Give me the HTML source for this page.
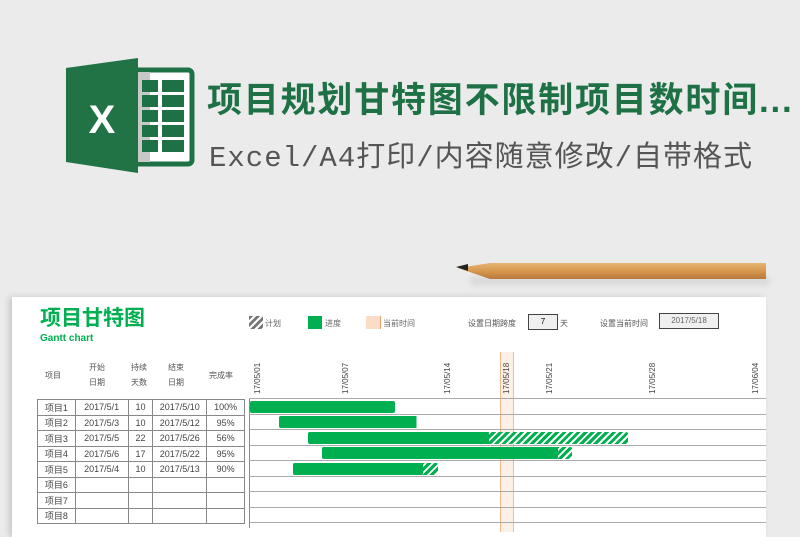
<!DOCTYPE html>
<html><head><meta charset="utf-8"><style>
body{margin:0;width:800px;height:526px;overflow:hidden;background:#ebebeb;font-family:"Liberation Sans","Noto Sans CJK SC",sans-serif;position:relative}
.abs{position:absolute}
.title{left:207px;top:72px;font-size:35px;font-weight:bold;color:#1e7145;letter-spacing:1.8px;white-space:nowrap}
.sub{left:209px;top:133px;font-size:29px;color:#555;white-space:nowrap;font-family:"Liberation Mono","Noto Sans CJK SC",monospace;letter-spacing:1px}
.paper{left:12px;top:297px;width:754px;height:240px;background:#fff;box-shadow:-3px 0 6px rgba(0,0,0,.15)}
table{border-collapse:collapse;font-size:9px;color:#444}
td{border:1px solid #888;height:14.5px;padding:0;text-align:center;white-space:nowrap}
.hl{position:absolute;left:249px;width:517px;height:1px;background:#aaa}
.bar{position:absolute;height:12px;border-radius:2px}
.date{position:absolute;font-size:8px;color:#444;transform:rotate(-90deg);transform-origin:left top;white-space:nowrap}
</style></head><body>
<svg class="abs" style="left:64px;top:58px" width="132" height="115" viewBox="0 0 132 115">
<rect x="70" y="12" width="58" height="94" rx="4" fill="#fff" stroke="#1e7145" stroke-width="5"/>
<rect x="72" y="14" width="14" height="90" fill="#c8c8c8"/>
<g fill="#1e7145">
<rect x="78" y="22" width="16" height="12"/><rect x="98" y="22" width="22" height="12"/>
<rect x="78" y="37" width="16" height="12"/><rect x="98" y="37" width="22" height="12"/>
<rect x="78" y="52" width="16" height="12"/><rect x="98" y="52" width="22" height="12"/>
<rect x="78" y="67" width="16" height="12"/><rect x="98" y="67" width="22" height="12"/>
<rect x="78" y="82" width="16" height="12"/><rect x="98" y="82" width="22" height="12"/>
</g>
<path d="M2 10 L74 0 L74 115 L2 104 Z" fill="#217346"/>
<text x="38" y="75" font-size="40" font-weight="bold" fill="#fff" text-anchor="middle" font-family="Liberation Sans">X</text>
</svg>
<div class="abs title">项目规划甘特图不限制项目数时间...</div>
<div class="abs sub">Excel/A4打印/内容随意修改/自带格式</div>
<div class="abs" style="left:470px;top:277px;width:300px;height:8px;background:rgba(0,0,0,.08);filter:blur(3px)"></div>
<svg class="abs" style="left:456px;top:261px" width="312" height="20">
<defs><linearGradient id="pg" x1="0" y1="0" x2="0" y2="1"><stop offset="0" stop-color="#e6b574"/><stop offset=".5" stop-color="#d7984f"/><stop offset="1" stop-color="#b8783a"/></linearGradient></defs>
<path d="M34 2 L310 2 L310 18 L34 18 L2 7 Z" fill="url(#pg)"/>
<path d="M0 6 L12 3 L12 10 Z" fill="#222"/>
</svg>
<div class="abs paper"></div>
<div class="abs" style="left:40px;top:302px;font-size:21px;font-weight:bold;color:#00b050">项目甘特图</div>
<div class="abs" style="left:40px;top:333px;font-size:10px;font-weight:bold;color:#00b050">Gantt chart</div>
<div class="abs" style="left:249px;top:316px;width:14px;height:13px;background:repeating-linear-gradient(135deg,#777 0 3px,#fff 3px 5px)"></div>
<div class="abs" style="left:265px;top:318px;font-size:8px;color:#666">计划</div>
<div class="abs" style="left:308px;top:316px;width:14px;height:13px;background:#00b050"></div>
<div class="abs" style="left:325px;top:318px;font-size:8px;color:#666">进度</div>
<div class="abs" style="left:366px;top:316px;width:14px;height:13px;background:#fbdcc6;border-right:1px solid #f0a070"></div>
<div class="abs" style="left:383px;top:318px;font-size:8px;color:#666">当前时间</div>
<div class="abs" style="left:468px;top:318px;font-size:8px;color:#555">设置日期跨度</div>
<div class="abs" style="left:528px;top:314px;width:28px;height:14px;border:1px solid #444;background:#f0f0f0;font-size:8px;text-align:center;line-height:14px">7</div>
<div class="abs" style="left:560px;top:318px;font-size:8px;color:#555">天</div>
<div class="abs" style="left:600px;top:318px;font-size:8px;color:#555">设置当前时间</div>
<div class="abs" style="left:659px;top:313px;width:58px;height:14px;border:1px solid #444;background:#f0f0f0;font-size:8px;text-align:center;line-height:14px;color:#666">2017/5/18</div>
<div class="abs" style="left:37px;top:360px;width:208px;font-size:8px;color:#555">
<span class="abs" style="left:8px;top:10px">项目</span>
<span class="abs" style="left:52px;top:0;line-height:15px;text-align:center">开始<br>日期</span>
<span class="abs" style="left:94px;top:0;line-height:15px">持续<br>天数</span>
<span class="abs" style="left:131px;top:0;line-height:15px">结束<br>日期</span>
<span class="abs" style="left:172px;top:10px">完成率</span>
</div>
<table class="abs" style="left:37px;top:399px;width:208px">
<colgroup><col style="width:38px"><col style="width:53px"><col style="width:25px"><col style="width:54px"><col style="width:38px"></colgroup>
<tr><td>项目1</td><td>2017/5/1</td><td>10</td><td>2017/5/10</td><td>100%</td></tr>
<tr><td>项目2</td><td>2017/5/3</td><td>10</td><td>2017/5/12</td><td>95%</td></tr>
<tr><td>项目3</td><td>2017/5/5</td><td>22</td><td>2017/5/26</td><td>56%</td></tr>
<tr><td>项目4</td><td>2017/5/6</td><td>17</td><td>2017/5/22</td><td>95%</td></tr>
<tr><td>项目5</td><td>2017/5/4</td><td>10</td><td>2017/5/13</td><td>90%</td></tr>
<tr><td>项目6</td><td></td><td></td><td></td><td></td></tr>
<tr><td>项目7</td><td></td><td></td><td></td><td></td></tr>
<tr><td>项目8</td><td></td><td></td><td></td><td></td></tr>
</table>
<div class="abs" style="left:249px;top:398px;width:1px;height:130px;background:#888"></div>
<div class="abs" style="left:500px;top:352px;width:12px;height:180px;background:#fdf0e4;border-left:1px solid #f5b98c;border-right:1px solid #f5b98c"></div>
<div class="hl" style="top:398px"></div><div class="hl" style="top:414px"></div><div class="hl" style="top:429px"></div><div class="hl" style="top:445px"></div><div class="hl" style="top:460px"></div><div class="hl" style="top:476px"></div><div class="hl" style="top:491px"></div><div class="hl" style="top:507px"></div><div class="hl" style="top:522px"></div>
<div class="bar" style="left:250px;top:401px;width:145px;background:#00b050"></div>
<div class="bar" style="left:279px;top:416px;width:145px;background:linear-gradient(90deg,#00b050 95%,transparent 95%),#fff"></div>
<div class="bar" style="left:308px;top:432px;width:320px;background:repeating-linear-gradient(135deg,#00b050 0 3px,#fff 3px 5px)"></div>
<div class="bar" style="left:308px;top:432px;width:181px;background:#00b050"></div>
<div class="bar" style="left:322px;top:447px;width:250px;background:repeating-linear-gradient(135deg,#00b050 0 3px,#fff 3px 5px)"></div>
<div class="bar" style="left:322px;top:447px;width:236px;background:#00b050"></div>
<div class="bar" style="left:293px;top:463px;width:145px;background:repeating-linear-gradient(135deg,#00b050 0 3px,#fff 3px 5px)"></div>
<div class="bar" style="left:293px;top:463px;width:130px;background:#00b050"></div>
<div class="date" style="left:253px;top:394px">17/05/01</div>
<div class="date" style="left:341px;top:394px">17/05/07</div>
<div class="date" style="left:443px;top:394px">17/05/14</div>
<div class="date" style="left:502px;top:394px">17/05/18</div>
<div class="date" style="left:545px;top:394px">17/05/21</div>
<div class="date" style="left:648px;top:394px">17/05/28</div>
<div class="date" style="left:751px;top:394px">17/06/04</div>
</body></html>
